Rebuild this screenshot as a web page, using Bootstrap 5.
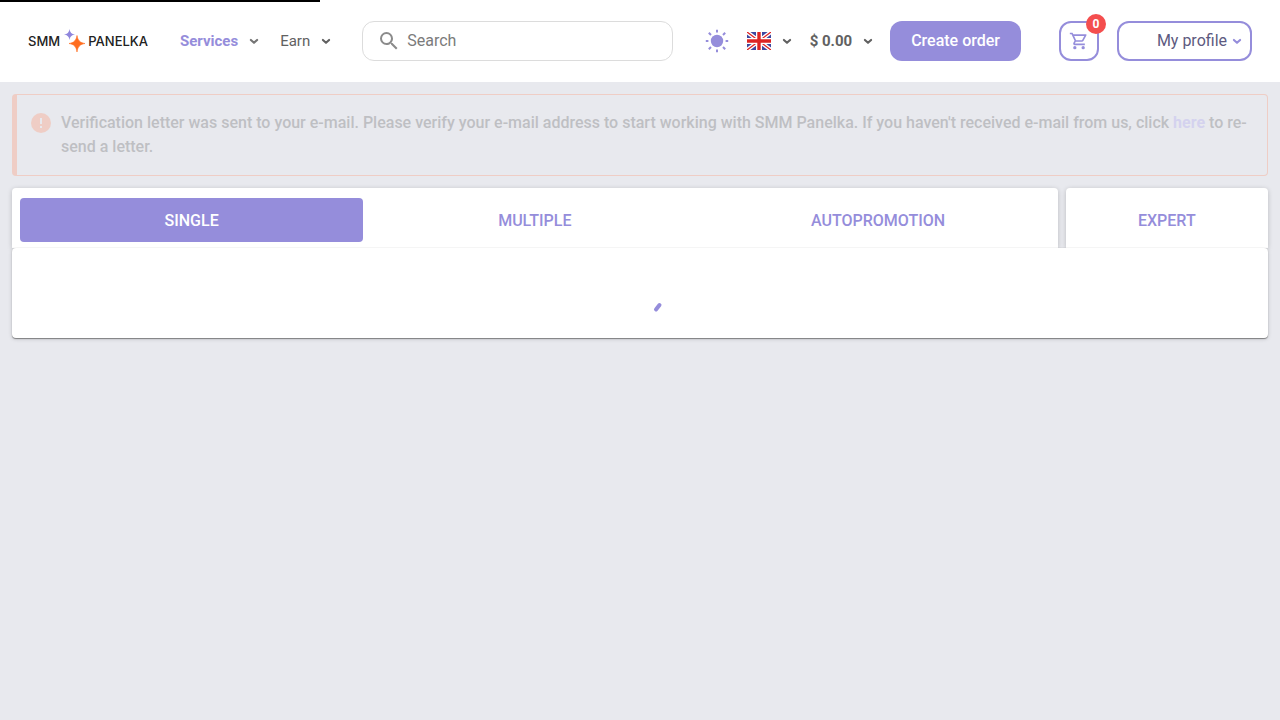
<!DOCTYPE html>
<html lang="en">
<head>
<meta charset="utf-8">
<meta name="viewport" content="width=device-width, initial-scale=1">
<title>SMM Panelka</title>
<link href="https://cdn.jsdelivr.net/npm/bootstrap@5.3.0/dist/css/bootstrap.min.css" rel="stylesheet">
<style>
  :root { --accent: #958ddb; --ink: #616161; --page: #e8e9ee; }
  body { min-height: 100vh; background: var(--page); font-family: Roboto, "Liberation Sans", sans-serif; font-size: 16px; line-height: 24px; color: var(--ink); }
  svg { display: block; flex: none; }
  .load-bar { top: 0; left: 0; width: 25%; height: 2px; background: #000; z-index: 5; }
  .topbar { min-height: 82px; padding: 0 28px; background: #fff; }
  .brand { color: #222; font: 500 13px/20px Inter, sans-serif; width: 120px; }
  .menu-btn { border: 0; background: none; padding: 0; display: flex; align-items: center; font-size: 15px; color: var(--ink); }
  .accent-text { color: var(--accent); }
  .main-nav { gap: 18px; margin-left: 32px; }
  .search { height: 40px; border: 1px solid #dcdcdc; border-radius: 12px; padding: 0 14px; gap: 6px; margin-left: 28px; margin-right: 32px; }
  .search input { border: 0; outline: 0; background: none; width: 100%; padding: 0; color: var(--ink); }
  .search input::placeholder { color: #7b7b7b; opacity: 1; }
  .lang-btn { margin-left: 18px; margin-right: 15px; }
  .main-btn { height: 40px; border-radius: 12px; padding: 0 21px; margin-left: 14px; margin-right: 38px; background: var(--accent); border: 0; color: #fff; font-weight: 500; }
  .line-btn { height: 40px; border: 2px solid var(--accent); border-radius: 12px; background: #fff; color: var(--accent); padding: 0; }
  .cart-btn { width: 40px; margin-right: 18px; }
  .profile-btn { width: 135px; padding-right: 5px; gap: 2px; }
  .profile-btn span { color: #5d5a80; }
  .count { top: -9px; right: -9px; width: 20px; height: 20px; border-radius: 50%; background: #f44e4e; color: #fff; font-size: 12px; line-height: 20px; font-weight: 700; }
  .content { padding-top: 12px; }
  .notice { border: 1px solid #ff9069; border-left-width: 5px; border-radius: 4px; padding: 16px 14px; margin-bottom: 12px; gap: 10px; opacity: .3; font-weight: 500; }
  .notice svg { margin-top: 2px; }
  .notice a { color: #a79ff0; font-weight: 700; text-decoration: none; }
  .panel { background: #fff; border-radius: 4px; box-shadow: 0 1px 5px rgba(0,0,0,.2); }
  .tabs-wide { flex: 0 0 83.25%; }
  .tabs-slim { flex: 1 1 0; margin-left: 8px; }
  .tab-panel { padding: 10px 8px 6px; border-radius: 4px 4px 0 0; }
  .tab-btn { flex: 1 1 0; height: 44px; padding-top: 2px; border: 0; border-radius: 4px; background: none; color: var(--accent); font-weight: 500; }
  .tab-btn.active { background: var(--accent); color: #fff; }
  .result { height: 90px; box-shadow: 0 1px 1px rgba(0,0,0,.4), 0 1px 4px rgba(0,0,0,.16); clip-path: inset(-1px -5px -6px -5px); padding-top: 35px; }
</style>
</head>
<body>
<svg width="0" height="0" class="position-absolute" aria-hidden="true">
  <symbol id="chev" viewBox="0 0 16 16"><path d="M4.900 6.900 8 9.800l3.100-2.900" fill="none" stroke="currentColor" stroke-width="2.100" stroke-linecap="round" stroke-linejoin="round"/></symbol>
</svg>
<div class="load-bar position-absolute"></div>
<header class="topbar d-flex align-items-center">
  <a class="brand d-flex align-items-center justify-content-between text-decoration-none" href="#">
    <span>SMM</span>
    <svg width="21" height="24" viewBox="0 0 21 24"><path d="M5.500 0Q6 5 11 5.500 6 6 5.500 11 5 6 0 5.500 5 5 5.500 0Z" fill="#8f86dd"/><path d="M13 6.500C13.800 11.500 16 13.700 21 14.500 16 15.300 13.800 17.500 13 23 12.200 17.500 10 15.300 5 14.500 10 13.700 12.200 11.500 13 6.500Z" fill="#ff6d1f" stroke="#ff6d1f" stroke-width=".6"/></svg>
    <span>PANELKA</span>
  </a>
  <nav class="main-nav d-flex align-items-center">
    <button class="menu-btn accent-text fw-bold gap-2" type="button">Services <svg width="16" height="16" style="color:#757575"><use href="#chev"/></svg></button>
    <button class="menu-btn gap-2" type="button">Earn <svg width="16" height="16"><use href="#chev"/></svg></button>
  </nav>
  <label class="search d-flex align-items-center flex-grow-1">
    <svg width="24" height="24" viewBox="0 0 24 24" fill="#8b8b8b"><path d="M9.500 3A6.500 6.500 0 0 1 16 9.500C16 11.110 15.410 12.590 14.440 13.730L14.710 14H15.500L20.500 19L19 20.500L14 15.500V14.710L13.730 14.440C12.590 15.410 11.110 16 9.500 16A6.500 6.500 0 0 1 3 9.500A6.500 6.500 0 0 1 9.500 3M9.500 5C7 5 5 7 5 9.500C5 12 7 14 9.500 14C12 14 14 12 14 9.500C14 7 12 5 9.500 5Z"/></svg>
    <input type="search" placeholder="Search" aria-label="Search">
  </label>
  <button class="menu-btn accent-text" type="button" aria-label="Theme">
    <svg width="24" height="24" viewBox="0 0 24 24"><circle cx="12" cy="12" r="6.200" fill="currentColor"/><path d="M12 .8v2.600M12 20.600v2.600M.8 12h2.600M20.600 12h2.600M3.800 3.800l2.200 2.200M18 18l2.200 2.200M3.800 20.200l2.200-2.200M18 6l2.200-2.200" stroke="currentColor" stroke-width="2"/></svg>
  </button>
  <button class="menu-btn lang-btn gap-2" type="button" aria-label="Language">
    <svg width="24" height="18" viewBox="0 0 24 18"><path fill="#3f479f" d="M0 0h24v18H0z"/><path d="M0 0l24 18M24 0L0 18" stroke="#fff" stroke-width="4"/><path d="M0 0l24 18M24 0L0 18" stroke="#e02020" stroke-width="1.300"/><path d="M12 0v18M0 9h24" stroke="#fff" stroke-width="6"/><path d="M12 0v18M0 9h24" stroke="#dc2424" stroke-width="3.400"/></svg>
    <svg width="16" height="16"><use href="#chev"/></svg>
  </button>
  <button class="menu-btn gap-2 fw-bold" type="button">$ 0.00 <svg width="16" height="16"><use href="#chev"/></svg></button>
  <button class="main-btn text-nowrap" type="button">Create order</button>
  <button class="line-btn cart-btn position-relative d-flex align-items-center justify-content-center" type="button" aria-label="Cart">
    <svg width="20" height="20" viewBox="0 0 24 24" fill="currentColor"><path d="M15.550 13c.75 0 1.410-.41 1.750-1.030l3.580-6.490A1 1 0 0 0 20.010 4H5.210l-.94-2H1v2h2l3.600 7.590-1.350 2.440C4.520 15.370 5.480 17 7 17h12v-2H7l1.100-2h7.450zM6.160 6h12.150l-2.760 5H8.530L6.160 6zM7 18a2 2 0 1 0 0 4 2 2 0 0 0 0-4zm10 0a2 2 0 1 0 0 4 2 2 0 0 0 0-4z"/></svg>
    <span class="count position-absolute">0</span>
  </button>
  <button class="line-btn profile-btn d-flex align-items-center justify-content-end" type="button"><span>My profile</span><svg width="16" height="16"><use href="#chev"/></svg></button>
</header>
<main class="content container-fluid">
  <div class="notice d-flex" role="alert">
    <svg width="20" height="20" viewBox="0 0 20 20"><circle cx="10" cy="10" r="10" fill="#ff9069"/><path d="M10 5v6M10 13v2" stroke="#e8e9ee" stroke-width="2"/></svg>
    <div>Verification letter was sent to your e-mail. Please verify your e-mail address to start working with SMM Panelka. If you haven't received e-mail from us, click <a href="#">here</a> to re-send a letter.</div>
  </div>
  <div class="d-flex">
    <div class="panel tab-panel tabs-wide d-flex">
      <button class="tab-btn active" type="button">SINGLE</button>
      <button class="tab-btn" type="button">MULTIPLE</button>
      <button class="tab-btn" type="button">AUTOPROMOTION</button>
    </div>
    <div class="panel tab-panel tabs-slim d-flex"><button class="tab-btn" type="button">EXPERT</button></div>
  </div>
  <section class="panel result position-relative d-flex justify-content-center" aria-busy="true">
    <svg width="50" height="50" viewBox="0 0 50 50"><path d="M41 26.500l3.500-4.500" stroke="#958ddb" stroke-width="4" stroke-linecap="round"/></svg>
  </section>
</main>
<script src="https://cdn.jsdelivr.net/npm/bootstrap@5.3.0/dist/js/bootstrap.bundle.min.js"></script>
</body>
</html>
